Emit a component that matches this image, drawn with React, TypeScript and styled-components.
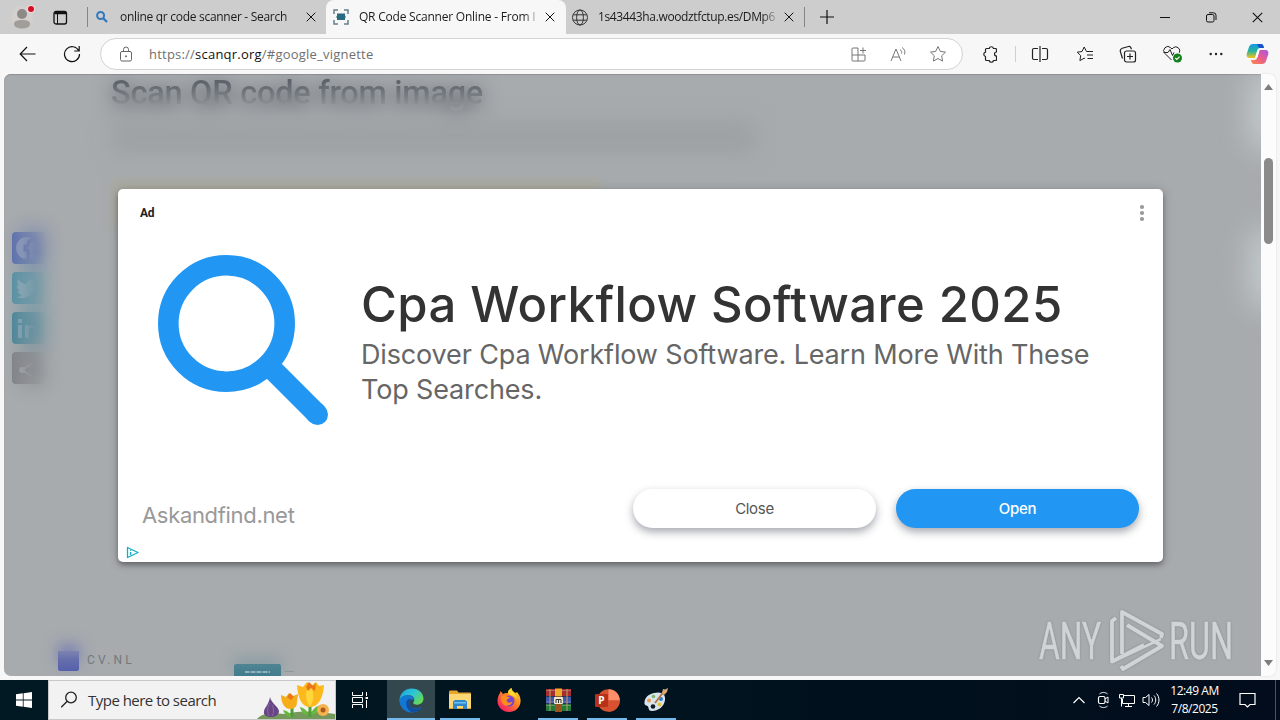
import React from "react";
import styled, { createGlobalStyle, css } from "styled-components";

const uiFont = `"Open Sans", "Noto Sans", sans-serif`;
const adFont = `Inter, Roboto, sans-serif`;

interface TabProps {
    title: string;
    icon: React.ReactNode;
    active?: boolean;
    spacing: number;
}
const BrowserTab = (props: TabProps) => {
    const { title, icon, active, spacing } = props;
    return (
        <Tab $active={active}>
            <Favicon>{icon}</Favicon>
            <TabTitle $spacing={spacing}>{title}</TabTitle>
            <CloseIcon size={10} />
        </Tab>
    );
};

const CloseIcon = ({ size }: { size: number }) => (
    <Glyph width={size} height={size} viewBox="0 0 10 10">
        <path d="M.7.7l8.6 8.6M9.3.7L.7 9.3" />
    </Glyph>
);

const starPath = "M9 1.5l2.3 4.9 5.2.7-3.8 3.7.9 5.3L9 13.5l-4.6 2.6.9-5.3L1.500 7.1l5.2-.7z";

const App = () => {
    return (
        <Screen>
            <GlobalStyle />
            <TabStrip>
                <ProfileCell>
                    <svg width="24" height="26" viewBox="0 0 24 26">
                        <circle cx="10" cy="13" r="11" fill="#d3d0ce" />
                        <circle cx="10" cy="10" r="5" fill="#8d8986" />
                        <path d="M2 20c0-3 3-4 8-4s8 1 8 4-4 4.500-8 4.500S2 23 2 20z" fill="#a19d99" />
                        <circle cx="19" cy="5" r="4" fill="#f4d9da" />
                        <circle cx="19" cy="5" r="3" fill="#d20f26" />
                    </svg>
                </ProfileCell>
                <WorkspaceCell>
                    <Glyph width="15" height="15" viewBox="0 0 15 15">
                        <rect x="1" y="1.500" width="12.500" height="12.500" rx="2" strokeWidth="1.300" />
                        <path d="M1.500 3h11.500" strokeWidth="2.500" />
                        <path d="M4.500 4v10" />
                    </Glyph>
                </WorkspaceCell>
                <TabDivider />
                <BrowserTab
                    title="online qr code scanner - Search"
                    spacing={-0.29}
                    icon={
                        <svg width="16" height="16" viewBox="0 0 16 16" fill="none" stroke="#2f78c0" strokeWidth="2">
                            <circle cx="6.600" cy="6.500" r="3.500" />
                            <path d="M9 9l4 4" strokeWidth="2.300" />
                        </svg>
                    } />
                <BrowserTab
                    active
                    title="QR Code Scanner Online - From I"
                    spacing={-0.22}
                    icon={
                        <svg width="16" height="16" viewBox="0 0 16 16" fill="none" stroke="#67808a" strokeWidth="1.500">
                            <path d="M1 5V1h4M11 1h4v4M15 11v4h-4M5 15H1v-4" />
                            <rect x="4" y="4.500" width="8" height="6.500" fill="#276d7f" stroke="none" />
                            <path d="M3 8h10" stroke="#276d7f" strokeWidth="1" />
                        </svg>
                    } />
                <BrowserTab
                    title="1s43443ha.woodztfctup.es/DMp6"
                    spacing={-0.36}
                    icon={
                        <Glyph width="17" height="17" viewBox="0 0 17 17" $color="#333">
                            <circle cx="8" cy="8.500" r="7.500" />
                            <ellipse cx="8" cy="8.500" rx="3.400" ry="7.500" />
                            <path d="M1.200 5.800h13.600M1.200 11.200h13.600" />
                        </Glyph>
                    } />
                <TabDivider />
                <NewTab>
                    <Glyph width="14" height="14" viewBox="0 0 14 14"><path d="M7 0v14M0 7h14" strokeWidth="1.200" /></Glyph>
                </NewTab>
                <WindowButtons>
                    <WindowButton><Glyph width="10" height="10" viewBox="0 0 10 10"><path d="M0 5.500h10" /></Glyph></WindowButton>
                    <WindowButton>
                        <Glyph width="11" height="11" viewBox="0 0 11 11">
                            <rect x=".500" y="2.500" width="7.500" height="7.500" rx="1.500" />
                            <path d="M3 .800h4.500a2.500 2.500 0 012.500 2.500V8" />
                        </Glyph>
                    </WindowButton>
                    <WindowButton><CloseIcon size={11} /></WindowButton>
                </WindowButtons>
            </TabStrip>

            <Toolbar>
                <ToolCell $width={56}>
                    <Glyph width="18" height="16" viewBox="0 0 18 16"><path d="M16.500 8H1.500M8 1L1.200 8 8 15" strokeWidth="1.200" /></Glyph>
                </ToolCell>
                <ToolCell $width={32}>
                    <Glyph width="18" height="18" viewBox="0 0 18 18">
                        <path d="M15.800 6A7.500 7.500 0 1016.500 9M16.200 1v5h-5" strokeWidth="1.200" />
                    </Glyph>
                </ToolCell>
                <AddressBar>
                    <Glyph width="14" height="17" viewBox="0 0 14 17" $color="#666">
                        <rect x="1.500" y="5.500" width="11" height="9.500" rx="1.500" />
                        <path d="M4.500 5.500V3.500a2.500 2.500 0 015 0v2" />
                        <circle cx="7" cy="10.300" r=".600" fill="#666" />
                    </Glyph>
                    <Url>https://<b>scanqr.org</b>/#google_vignette</Url>
                    <ToolCell $width={40}>
                        <Glyph width="17" height="17" viewBox="0 0 17 17" $color="#777">
                            <path d="M8 2H3a1 1 0 00-1 1v11a1 1 0 001 1h11a1 1 0 001-1V9H2M8 2v13M13 1.500v6M10 4.500h6" />
                        </Glyph>
                    </ToolCell>
                    <ToolCell $width={40}>
                        <Glyph width="17" height="17" viewBox="0 0 17 17" $color="#777">
                            <path d="M1 15L6 3l5 12M2.700 11h6.600M10 3.500c1.500 1 2 2.500 1.500 4M12 1.500c2.500 1.500 3.500 4 2.500 7" />
                        </Glyph>
                    </ToolCell>
                    <ToolCell $width={40}>
                        <Glyph width="18" height="18" viewBox="0 0 18 18" $color="#777"><path d={starPath} /></Glyph>
                    </ToolCell>
                </AddressBar>
                <ToolCell $width={52}>
                    <Glyph width="16" height="18" viewBox="-1 0 16 18" $color="#222">
                        <path d="M4.500 3.500h2.700a2.200 2.200 0 014.300 0h2a1 1 0 011 1V7a2 2 0 000 4v3.500a1 1 0 01-1 1h-2a2.200 2.200 0 01-4.300 0H4.500a1 1 0 01-1-1v-3a2.200 2.200 0 010-4.300V4.500a1 1 0 011-1z" strokeWidth="1.200" strokeLinejoin="round" />
                    </Glyph>
                </ToolCell>
                <ToolDivider />
                <ToolCell $width={47}>
                    <Glyph width="18" height="18" viewBox="0 0 18 18" $color="#222">
                        <path d="M7 3.500H3a1.500 1.500 0 00-1.500 1.500v8A1.500 1.500 0 003 14.500h4M11 3.500h4A1.500 1.500 0 0116.500 5v8a1.500 1.500 0 01-1.500 1.500h-4M9 1v16" strokeWidth="1.200" />
                    </Glyph>
                </ToolCell>
                <ToolCell $width={43}>
                    <Glyph width="18" height="18" viewBox="0 0 18 18" $color="#222">
                        <path d="M10.500 6.500L8.200 2 6 6.500l-4.800.700 3.500 3.400-.800 5 4.300-2.400.800.500M10.500 6.500H17M11 10h6M11.500 13.500H17" />
                    </Glyph>
                </ToolCell>
                <ToolCell $width={44}>
                    <Glyph width="18" height="18" viewBox="0 0 18 18" $color="#222">
                        <rect x="5.500" y="6" width="11" height="11" rx="2" strokeWidth="1.200" />
                        <path d="M11 8.500v6M8 11.500h6M3.500 13.500L1.500 7a3 3 0 011.800-3.800L9.500 1.500a2 2 0 012.400 1.300l.500 1.500" strokeWidth="1.200" />
                    </Glyph>
                </ToolCell>
                <ToolCell $width={44}>
                    <svg width="20" height="18" viewBox="-.5 0 20 18" fill="none" stroke="#222">
                        <path d="M9 15L2.500 8.500a4 4 0 015.700-5.800L9.500 4l1.300-1.300a4 4 0 016 5M1 7.500h4.500l2-3 2.500 6 1.500-3" />
                        <circle cx="15" cy="13" r="4.500" fill="#13801e" stroke="none" />
                        <path d="M12.800 13l1.500 1.500 2.800-2.800" stroke="#fff" strokeWidth="1.100" />
                    </svg>
                </ToolCell>
                <ToolCell $width={43}>
                    <svg width="14" height="4" viewBox="0 0 14 4" fill="#222">
                        <circle cx="1.700" cy="2" r="1.200" /><circle cx="7" cy="2" r="1.200" /><circle cx="12.300" cy="2" r="1.200" />
                    </svg>
                </ToolCell>
                <ToolCell $width={41}><CopilotLogo /></ToolCell>
            </Toolbar>

            <Content>
                <Viewport>
                    <Page>
                        <PageHeading>Scan QR code from image</PageHeading>
                        <Smudge />
                        <Notice />
                    </Page>
                    <ShareBar>
                        <ShareButton $color="#5168ad">
                            <svg width="26" height="26" viewBox="0 0 26 26">
                                <circle cx="13" cy="13" r="11" />
                                <path d="M14 24V15h-3v-4h3V9c0-3 2-4 6-4" fill="none" stroke="#5f73ac" strokeWidth="3" />
                            </svg>
                        </ShareButton>
                        <ShareButton $color="#4c8da2">
                            <svg width="26" height="26" viewBox="0 0 26 26">
                                <path d="M2 22c3 0 5-1 6-2-3-1-4-2-4-4l2-.500C3 14 3 12 3 10l2 .800C3 8 3 6 4 4c3 4 6 5 9 5 0-4 4-6 8-4l3-1-2 4c0 11-10 18-20 14z" />
                            </svg>
                        </ShareButton>
                        <ShareButton $color="#3f8197">
                            <svg width="26" height="26" viewBox="0 0 26 26">
                                <path d="M4 10h4v13H4zM4 4h4v4H4zM11 10h4v2c3-4 9-2 9 3v8h-4v-7c0-4-5-4-5 0v7h-4z" />
                            </svg>
                        </ShareButton>
                        <ShareButton $color="#7b7d82">
                            <svg width="26" height="26" viewBox="0 0 26 26">
                                <path d="M19 8L8 15l11 7" fill="none" stroke="#b4bbc4" strokeWidth="2" />
                                <circle cx="8" cy="15" r="3" />
                            </svg>
                        </ShareButton>
                    </ShareBar>
                    <EdgeGlow $top={0} />
                    <EdgeGlow $top={158} />
                    <PageFooter>
                        <FooterLogo />
                        <FooterBrand>CV.NL</FooterBrand>
                        <FooterButton />
                        <FooterDash />
                    </PageFooter>
                    <Modal>
                        <ModalTop>
                            <AdLabel>Ad</AdLabel>
                            <svg width="6" height="18" viewBox="0 0 6 18" fill="#999">
                                <circle cx="3" cy="3" r="2.100" /><circle cx="3" cy="9" r="2.100" /><circle cx="3" cy="15" r="2.100" />
                            </svg>
                        </ModalTop>
                        <ModalBody>
                            <svg width="172" height="172" viewBox="0 0 172 172" fill="none" stroke="#2196f3">
                                <circle cx="69.500" cy="69.500" r="58.200" strokeWidth="20.600" />
                                <path d="M112 112L160.500 160.500" strokeWidth="21" />
                                <path d="M158 158l2.500 2.500" strokeWidth="21" strokeLinecap="round" />
                            </svg>
                            <AdCopy>
                                <AdHeadline>Cpa Workflow Software 2025</AdHeadline>
                                <AdText>Discover Cpa Workflow Software. Learn More With These<br />Top Searches.</AdText>
                            </AdCopy>
                        </ModalBody>
                        <ModalActions>
                            <Advertiser>Askandfind.net</Advertiser>
                            <AdButton>Close</AdButton>
                            <AdButton $primary>Open</AdButton>
                        </ModalActions>
                        <AdChoices>
                            <svg width="13" height="13" viewBox="-.5 0 13 13" fill="none" stroke="#12aec4" strokeWidth="1.300" strokeLinejoin="round">
                                <path d="M1 1.500v10l10.500-5z" />
                                <path d="M4.200 4v.900M4.200 6v3" />
                            </svg>
                        </AdChoices>
                    </Modal>
                    <Watermark><AnyRunLogo /></Watermark>
                </Viewport>
                <ScrollTrack>
                    <ScrollArrow viewBox="0 0 9 6"><path d="M0 6L4.500 0 9 6z" /></ScrollArrow>
                    <ScrollThumb />
                    <ScrollArrow viewBox="0 0 9 6"><path d="M0 0l4.500 6L9 0z" /></ScrollArrow>
                </ScrollTrack>
            </Content>

            <Taskbar>
                <StartButton>
                    <svg width="16" height="16" viewBox="0 0 16 16" fill="#fff">
                        <path d="M0 2.300L6.800 1.300v6.300H0zM7.600 1.200L16 0v7.600H7.600zM0 8.400h6.800v6.300L0 13.700zM7.600 8.400H16V16l-8.400-1.200z" />
                    </svg>
                </StartButton>
                <SearchBox>
                    <Glyph width="18" height="18" viewBox="0 0 18 18" $color="#222">
                        <circle cx="10" cy="6.500" r="5.300" strokeWidth="1.300" />
                        <path d="M6.200 10.300L.200 16.300" strokeWidth="1.300" />
                    </Glyph>
                    <SearchHint>Type here to search</SearchHint>
                    <Flowers />
                </SearchBox>
                <TaskView>
                    <Glyph width="18" height="16" viewBox="0 0 18 16" $color="#fff">
                        <path d="M1.500 0v3.500h10V0M1.500 16v-3.500h10V16M1.500 5.500h10v5h-10zM15.500 0v4M15.500 8v8" />
                        <path d="M14.500 6h2.500" strokeWidth="2" />
                    </Glyph>
                </TaskView>
                <Apps>
                    <AppCell $state="active"><EdgeLogo /></AppCell>
                    <AppCell $state="open"><ExplorerIcon /></AppCell>
                    <AppCell><FirefoxLogo /></AppCell>
                    <AppCell $state="open"><RarIcon /></AppCell>
                    <AppCell $state="open"><SlidesIcon /></AppCell>
                    <AppCell $state="open"><PaintIcon /></AppCell>
                </Apps>
                <Tray>
                    <TrayCell>
                        <Glyph width="12" height="8" viewBox="0 0 12 8" $color="#fff"><path d="M.500 7L6 1.500 11.500 7" strokeWidth="1.200" /></Glyph>
                    </TrayCell>
                    <TrayCell>
                        <Glyph width="14" height="18" viewBox="0 0 14 18" $color="#fff">
                            <rect x="2.500" y="5.500" width="6.500" height="7" rx="1.500" strokeWidth="1.200" />
                            <path d="M9 8l3-2v6l-3-2M3.500 3c2-2 6-2 8 0M3.500 15c2 2 6 2 8 0" />
                        </Glyph>
                    </TrayCell>
                    <TrayCell>
                        <Glyph width="18" height="16" viewBox="0 0 18 16" $color="#fff">
                            <path d="M6 3.500h10.500v8H4.500V7M10.500 11.500v3M7 14.500h7M1.500 2.500h4v3.500h-4zM3.500 6v8.500" />
                        </Glyph>
                    </TrayCell>
                    <TrayCell>
                        <Glyph width="18" height="16" viewBox="0 0 18 16" $color="#fff">
                            <path d="M1 5.500h2.500L7 2.500v11l-3.500-3H1zM9.500 5.500c1.300 1.500 1.300 3.500 0 5M12 3.500c2.300 2.500 2.300 6.500 0 9M14.500 1.500c3.300 3.500 3.300 9.500 0 13" />
                        </Glyph>
                    </TrayCell>
                    <Clock>
                        <span>12:49 AM</span>
                        <span>7/8/2025</span>
                    </Clock>
                    <Notifications>
                        <Glyph width="17" height="17" viewBox="0 0 17 17" $color="#fff">
                            <path d="M1 1.500h15v11h-5l-2.500 2.500L6 12.500H1z" strokeWidth="1.200" />
                        </Glyph>
                    </Notifications>
                    <ShowDesktop />
                </Tray>
            </Taskbar>
        </Screen>
    );
};

const CopilotLogo = () => (
    <svg width="23" height="22" viewBox="0 0 23 22">
        <defs>
            <linearGradient id="cpA" x1="0" y1="0" x2="0" y2="1">
                <stop offset="0" stopColor="#1499e8" /><stop offset=".5" stopColor="#27b39b" /><stop offset="1" stopColor="#f4c51c" />
            </linearGradient>
            <linearGradient id="cpB" x1="1" y1="0" x2="0" y2="1">
                <stop offset="0" stopColor="#a953e8" /><stop offset=".55" stopColor="#ee6183" /><stop offset="1" stopColor="#fb8b45" />
            </linearGradient>
        </defs>
        <path d="M7 1h8c2 0 2.500 2 3 4h-4c-2 0-2.500 1.500-3 3l-2 7H4c-3 0-4-2-3-5l2-6c.700-2 2-3 4-3z" fill="url(#cpA)" />
        <path d="M11 1h4c2 0 2.500 2 3 4h-4c-1.500 0-2-2-3-4z" fill="#1654c8" />
        <path d="M16 21H8c-2 0-2.500-2-3-4h3c2 0 3-1 3.500-3l2-7H19c3 0 4 2 3 5l-2 6c-.700 2-2 3-4 3z" fill="url(#cpB)" />
        <path d="M11.500 7.500h2L11.500 14h-2z" fill="#fff" />
    </svg>
);

const AnyRunLogo = () => (
    <svg width="200" height="64" viewBox="0 0 200 64">
        <g fill="#d0d4d6" stroke="#d0d4d6" strokeWidth=".5" fontFamily="Roboto" fontSize="51.500" fontWeight="400">
            <text x="0" y="50" textLength="62" lengthAdjust="spacingAndGlyphs">ANY</text>
            <text x="130" y="50" textLength="64" lengthAdjust="spacingAndGlyphs">RUN</text>
        </g>
        <g fill="none" stroke="#d0d4d6" strokeWidth="3.800" strokeLinejoin="round">
            <path d="M77 9l-4 3v40.500L105 36" />
            <path d="M122 29l1-4L83 3v42" />
            <path d="M88 16l35 21L84 60l-2-3" />
            <path d="M73 53L122 30" strokeWidth="2.500" />
        </g>
    </svg>
);

const Flowers = () => (
    <FlowerArt viewBox="0 0 78 38">
        <path d="M0 38c6-7 16-6 28-5 12-3 24-3 32-2 8 1 14 1 18 2v5z" fill="#74995a" />
        <path d="M35 36V22M53 36V16" stroke="#4f9e35" strokeWidth="3" />
        <path d="M33 36c-4-1-6-4-7-7 5 1 8 4 8 7zM54 34c1-6 5-9 10-10-1 6-4 9-10 10zM51 34c-1-5-4-7-8-8 1 5 4 8 8 8z" fill="#69b83e" />
        <path d="M13 16c1 6 8 9 9 14 0 4-4 6-8 6s-8-2-7-6c1-4 5-7 6-14z" fill="#684585" />
        <path d="M13 22c-3 4-3 9-1 13M15 24c2 4 2 8 0 11" stroke="#8e6aaa" fill="none" />
        <path d="M24 14l5 2 3-4 4 3 5-2-1 8c0 5-3 7-7 7-5 0-9-6-9-14z" fill="#f5ae1a" />
        <path d="M40 4l6 2 4-5 5 3 4-3 3 4 5-1c-1 14-6 22-14 22S41 18 40 4z" fill="#fbb91e" />
        <path d="M53 26c-5-7-5-15-1-23 5 7 6 15 1 23z" fill="#ffd73b" />
        <path d="M49 6l3-5 4 4 3-3-1 8-4-3-3 3zM30 16l3-4 4 4-3 3z" fill="#e97719" />
        <circle cx="66" cy="29" r="6" fill="#f7b24d" /><circle cx="66" cy="29" r="2.500" fill="#a75b1f" />
    </FlowerArt>
);

const EdgeLogo = () => (
    <svg width="25" height="25" viewBox="0 0 24 24">
        <defs>
            <linearGradient id="edgeTop" x1="0" y1="0" x2="1" y2=".6">
                <stop offset="0" stopColor="#1c9fe0" /><stop offset=".55" stopColor="#2cc6d4" /><stop offset="1" stopColor="#63d857" />
            </linearGradient>
        </defs>
        <path d="M.500 11C1.500 4.500 6 .500 12 .500c7 0 11.500 4.500 11.500 9.500 0 4-3 6-6.500 6-2.500 0-4-1-3-2.500 2-3-.500-6.500-4.500-6.500C5 7 1.500 9 .500 13z" fill="url(#edgeTop)" />
        <path d="M.500 12C1 8.500 5 6.500 9.500 7c3 .300 5 2 5 4.500-3-1.500-5 1-4.500 3.500.500 4 6 6.500 12 3-2 3.500-6 5.500-10 5.500C5.500 23.500.200 18 .500 12z" fill="#1477d2" />
        <path d="M8.500 11C6 13 6 20 12.500 23.500 16.500 23.500 20 21.500 22 18.500 16 21.500 10.500 19 10 15c-.300-2 .5-3.500 2-4-1-.500-2.500-.500-3.500 0z" fill="#114f9e" />
    </svg>
);

const ExplorerIcon = () => (
    <svg width="22" height="20" viewBox="0 0 22 20">
        <path d="M0 1.500L1 .500h7l1.500 2H21a1 1 0 011 1V19H0z" fill="#e6a42c" />
        <rect y="4" width="22" height="14" fill="#fbd875" />
        <path d="M4 19v-7.500l2-1.500h10l2 1.500V19h-4v-3H8v3z" fill="#3187cc" />
        <path d="M5 12h12v1.500H5z" fill="#6cc0f1" />
    </svg>
);

const FirefoxLogo = () => (
    <svg width="24" height="24" viewBox="0 0 24 24">
        <defs>
            <linearGradient id="fox" x1="1" y1="0" x2=".2" y2="1">
                <stop offset="0" stopColor="#ffe53b" /><stop offset=".45" stopColor="#ff8a1f" /><stop offset="1" stopColor="#f5156c" />
            </linearGradient>
        </defs>
        <path d="M3 5l.500-2 2.500 3c1.500-1 3-1.300 5-1 0-2 1.500-4 3.500-5 0 2.500 2 3.500 4 5l1.500-1c2.500 3 4 6 3.500 10-.500 6-5.500 10-11.500 10C5.500 24 .500 19 .500 13 .500 10 1.500 7 3 5z" fill="url(#fox)" />
        <circle cx="12" cy="13" r="5.500" fill="#7746cf" />
        <path d="M4 9c3-3 6 0 9 0-1 2-3 1.500-3.500 3.500 1 3 4 2.500 6 1-1 5-9 6-11 0z" fill="#ff8d1c" />
        <path d="M11 5c0-2 1.500-4 3.500-5 0 4 5 5 5.500 11-1.500-2-3-3-5-3.500C13.500 7 12 6 11 5z" fill="#ffd92e" />
    </svg>
);

const RarIcon = () => (
    <svg width="25" height="24" viewBox="0 0 25 24">
        <rect y="1" width="25" height="7" fill="#a72e2e" />
        <rect y="8.500" width="25" height="7" fill="#3e56ac" />
        <rect y="16" width="25" height="7" fill="#237b3a" />
        <path d="M0 2.500h25M0 14h25M0 17.500h25" stroke="#d5ccc5" strokeOpacity=".35" />
        <rect x="9" y="0" width="7" height="24" fill="#9b541d" />
        <path d="M9 1h7v7H9z" fill="#eeac2e" />
        <path d="M4 1v22M21 1v22" stroke="#c1a067" />
        <rect x="8" y="9" width="9" height="7" rx="1" fill="#f1e7ce" />
        <path d="M10 15v-3.500h5V15M12.500 12v3" stroke="#333" fill="none" />
    </svg>
);

const SlidesIcon = () => (
    <svg width="25" height="23" viewBox="0 0 25 23">
        <circle cx="13.500" cy="11.500" r="11.300" fill="#d35230" />
        <path d="M13.500.200A11.300 11.300 0 0124.800 11.500H13.500z" fill="#ff8f6b" />
        <path d="M24.800 11.500A11.300 11.300 0 0113.500 22.800V11.500z" fill="#d9512f" />
        <rect y="5" width="13" height="13" rx="1" fill="#b7311a" />
        <text x="3.300" y="15" fill="#fff" fontFamily="Open Sans" fontSize="10" fontWeight="700">P</text>
    </svg>
);

const PaintIcon = () => (
    <svg width="24" height="24" viewBox="0 0 24 24">
        <path d="M10 5c7-2 12 1 11 7-1 7-7 11-13 11-4 0-3-3-4-4.500C3 17 0 18 .500 14 1 9 5 6 10 5z" fill="#d9e4ec" />
        <circle cx="9" cy="18.500" r="2.300" fill="#141c23" />
        <circle cx="5" cy="12.500" r="2" fill="#e99a4a" /><circle cx="9.500" cy="8.500" r="1.800" fill="#7fb46c" />
        <circle cx="17" cy="11" r="2" fill="#2e7fd0" /><circle cx="15.500" cy="16.500" r="2" fill="#e3c33d" />
        <path d="M11 15L19.500 4" stroke="#b47a43" strokeWidth="2" />
        <path d="M18 5l1-4 2 .5L24 0l-1 4-3 3z" fill="#d8a877" />
    </svg>
);

export default App;

const GlobalStyle = createGlobalStyle`
    *{
        box-sizing: border-box;
    }
    body{
        margin: 0;
        font-family: ${uiFont};
    }
    svg{
        display: block;
        flex-shrink: 0;
    }
`

const Glyph = styled.svg<{ $color?: string }>`
    fill: none;
    stroke: ${({ $color }) => $color || '#111'};
`

const Screen = styled.div`
    width: 1280px;
    height: 720px;
    display: flex;
    flex-direction: column;
    overflow: hidden;
    background: #f7f7f8;
`

const TabStrip = styled.header`
    height: 34px;
    display: flex;
    align-items: center;
    background: #cdcdcd;
`

const ProfileCell = styled.div`
    width: 50px;
    padding: 0 0 0 12px;
`

const WorkspaceCell = styled.div`
    width: 37px;
    padding-left: 3px;
`

const TabDivider = styled.div`
    width: 1px;
    height: 20px;
    margin-right: -1px;
    background: #858585;
`

const Tab = styled.div<{ $active?: boolean }>`
    width: 239px;
    height: 34px;
    display: flex;
    align-items: center;
    padding-left: 7px;
    ${({ $active }) => $active && css`
        width: 240px;
        margin-right: -1px;
        background: #f7f7f7;
        border-radius: 8px 8px 0 0;
    `}
`

const Favicon = styled.span`
    width: 26px;
    flex-shrink: 0;
`

const TabTitle = styled.span<{ $spacing: number }>`
    width: 180px;
    margin-right: 6px;
    flex-shrink: 0;
    white-space: nowrap;
    font-size: 12px;
    line-height: 18px;
    letter-spacing: ${({ $spacing }) => $spacing}px;
    color: #1b1b1b;
    mask-image: linear-gradient(to right, #000 164px, transparent 182px);
`

const NewTab = styled.div`
    margin-left: 16px;
`

const WindowButtons = styled.div`
    display: flex;
    margin-left: auto;
`

const WindowButton = styled.div`
    width: 46px;
    display: flex;
    align-items: center;
    justify-content: center;
`

const Toolbar = styled.div`
    height: 40px;
    display: flex;
    align-items: center;
`

const ToolCell = styled.div<{ $width: number }>`
    width: ${({ $width }) => $width}px;
    flex-shrink: 0;
    display: flex;
    align-items: center;
    justify-content: center;
`

const ToolDivider = styled.div`
    width: 1px;
    height: 16px;
    background: #cfcfcf;
`

const AddressBar = styled.div`
    width: 863px;
    height: 32px;
    margin-left: 12px;
    padding: 0 4px 0 18px;
    display: flex;
    align-items: center;
    background: #fff;
    border: 1px solid #d2d2d2;
    border-radius: 16px;
`

const Url = styled.span`
    flex: 1;
    padding-left: 16px;
    font-size: 13px;
    letter-spacing: 0.220px;
    color: #707070;
    b{
        font-weight: 400;
        color: #111;
    }
`

const Content = styled.div`
    height: 606px;
    display: flex;
    padding: 0 4px 4px;
`

const Viewport = styled.main`
    position: relative;
    width: 1257px;
    height: 602px;
    overflow: hidden;
    border-radius: 7px 0 0 7px;
    background: #a7abae;
    box-shadow: inset 0 1px 1px #8d9194;
`

const Page = styled.section`
    padding: 0 0 0 107px;
`

const PageHeading = styled.h1`
    width: 380px;
    height: 46px;
    margin: 0;
    font: 500 32.500px/39px Roboto, sans-serif;
    letter-spacing: -0.250px;
    white-space: nowrap;
    color: #646a70;
    background: linear-gradient(#5d636a 8px, #7d8287 24px, #94989b 33px);
    background-clip: text;
    -webkit-text-fill-color: transparent;
    filter: drop-shadow(0 3px 10px #50555e);
`

const Smudge = styled.div`
    width: 645px;
    height: 34px;
    background: #989c9f;
    opacity: .65;
    filter: blur(11px);
`

const Notice = styled.div`
    width: 490px;
    height: 50px;
    margin: 25px 0 0;
    background: #a9a9a0;
    filter: blur(4px);
`

const ShareBar = styled.nav`
    position: absolute;
    left: 8px;
    top: 158px;
    display: grid;
    gap: 8px;
`

const ShareButton = styled.div<{ $color: string }>`
    position: relative;
    width: 34px;
    height: 32px;
    padding: 3px 2px;
    border-radius: 4px 0 0 4px;
    background: linear-gradient(to right, ${({ $color }) => $color}, transparent);
    opacity: .85;
    &::before{
        content: "";
        position: absolute;
        left: 10px;
        top: -2px;
        width: 22px;
        height: 36px;
        background: ${({ $color }) => $color};
        filter: blur(10px);
        opacity: .7;
    }
    svg{
        position: relative;
        fill: #b4bdca;
        opacity: .4;
        mask-image: linear-gradient(to right, #000 30%, transparent 85%);
    }
`

const EdgeGlow = styled.div<{ $top: number }>`
    position: absolute;
    right: -22px;
    top: ${({ $top }) => $top}px;
    width: 30px;
    height: 74px;
    background: #cbd1d5;
    filter: blur(16px);
`

const PageFooter = styled.footer`
    position: absolute;
    left: 54px;
    bottom: 0;
    height: 40px;
    display: flex;
    align-items: flex-end;
`

const FooterLogo = styled.div`
    width: 21px;
    height: 20px;
    margin-bottom: 5px;
    background: linear-gradient(#7c83b0, #656eac 9px, #5660ab);
    border-radius: 0 0 2px 2px;
    box-shadow: 0 -7px 15px -1px #7077b2;
`

const FooterBrand = styled.span`
    width: 147px;
    margin-bottom: 7px;
    padding-left: 8px;
    font: 400 12px/17px Roboto, sans-serif;
    letter-spacing: 3.100px;
    color: #74787c;
`

const FooterButton = styled.div`
    width: 47px;
    height: 12px;
    margin-left: 8px;
    padding: 7px 11px 0;
    border-radius: 2px 2px 0 0;
    background: linear-gradient(#4f8493, #427c8d);
    box-shadow: 0 -5px 15px #82999f;
    &::after{
        content: "";
        display: block;
        height: 2px;
        background: repeating-linear-gradient(to right, #8eb3be 0 4px, #6496a4 4px 6px);
    }
`

const FooterDash = styled.div`
    width: 9px;
    height: 1px;
    margin: 0 0 4px 4px;
    background: #8b989d;
`

const Modal = styled.section`
    position: absolute;
    left: 114px;
    top: 115px;
    width: 1045px;
    height: 373px;
    display: flex;
    flex-direction: column;
    background: #fff;
    border-radius: 5px;
    box-shadow: 0 3px 5px rgba(0, 0, 0, .32), 0 1px 12px rgba(0, 0, 0, .16);
    font-family: ${adFont};
`

const ModalTop = styled.div`
    height: 48px;
    display: flex;
    align-items: center;
    justify-content: space-between;
    padding: 0 18px 0 22px;
`

const AdLabel = styled.span`
    font: 700 12px Roboto, sans-serif;
    letter-spacing: -0.200px;
    color: #202124;
`

const ModalBody = styled.div`
    display: flex;
    height: 252px;
    padding: 17px 0 0 39px;
`

const AdCopy = styled.div`
    padding: 21px 0 0 32px;
`

const AdHeadline = styled.h2`
    margin: 0;
    font-size: 49px;
    line-height: 60px;
    font-weight: 500;
    letter-spacing: 0.430px;
    white-space: nowrap;
    color: #333;
`

const AdText = styled.p`
    margin: 2px 0 0;
    font-size: 27px;
    line-height: 35px;
    letter-spacing: -0.150px;
    white-space: nowrap;
    color: #666;
`

const ModalActions = styled.div`
    height: 39px;
    display: flex;
    align-items: center;
    gap: 20px;
    padding: 0 24px;
`

const Advertiser = styled.span`
    margin: 13px auto 0 0;
    font-size: 22px;
    letter-spacing: -0.320px;
    color: #999;
`

const AdButton = styled.button<{ $primary?: boolean }>`
    width: 243px;
    height: 39px;
    padding: 0 0 1px;
    border: none;
    border-radius: 20px;
    background: ${({ $primary }) => $primary ? '#2196f3' : '#fff'};
    color: ${({ $primary }) => $primary ? '#fff' : '#555'};
    font-family: ${adFont};
    font-size: 15px;
    font-weight: ${({ $primary }) => $primary ? 500 : 400};
    letter-spacing: -0.300px;
    box-shadow: 0 4px 9px rgba(60, 64, 80, .45);
`

const AdChoices = styled.div`
    margin: 18px 0 0 8px;
`

const Watermark = styled.div`
    position: absolute;
    left: 1035px;
    top: 535px;
    filter: drop-shadow(0 0 1px #85898c);
`

const ScrollTrack = styled.aside`
    width: 15px;
    height: 602px;
    display: flex;
    flex-direction: column;
    align-items: center;
    padding: 10px 0;
    background: #fcfcfc;
    border-radius: 0 7px 7px 0;
    box-shadow: 0 0 2px #d5d5d5;
`

const ScrollArrow = styled.svg`
    width: 9px;
    height: 6px;
    fill: #7d7d7d;
`

const ScrollThumb = styled.div`
    width: 9px;
    height: 86px;
    margin: 68px 0 auto;
    border-radius: 5px;
    background: #8b8b8b;
`

const Taskbar = styled.footer`
    height: 40px;
    display: flex;
    background: linear-gradient(to right, #001923, #00131e 55%, #020c1c);
    color: #fff;
`

const StartButton = styled.div`
    width: 48px;
    display: flex;
    align-items: center;
    justify-content: center;
`

const SearchBox = styled.div`
    width: 288px;
    display: flex;
    align-items: center;
    padding-left: 12px;
    background: #f2f2f2;
    border: 1px solid #c8c8c8;
`

const SearchHint = styled.span`
    padding-left: 9px;
    font-size: 15px;
    letter-spacing: -0.520px;
    white-space: nowrap;
    color: #333;
`

const FlowerArt = styled.svg`
    width: 78px;
    height: 38px;
    margin-left: auto;
`

const TaskView = styled.div`
    width: 51px;
    display: flex;
    align-items: center;
    padding-left: 15px;
`

const Apps = styled.div`
    display: flex;
    gap: 1px;
`

const AppCell = styled.div<{ $state?: 'active' | 'open' }>`
    width: 48px;
    height: 40px;
    display: flex;
    align-items: center;
    justify-content: center;
    background: ${({ $state }) => $state === 'active' ? '#33474f' : 'transparent'};
    ${({ $state }) => $state && css`
        background-image: linear-gradient(#76b9ed, #76b9ed);
        background-repeat: no-repeat;
        background-position: center bottom;
        background-size: ${$state === 'active' ? 48 : 40}px 2px;
    `}
`

const Tray = styled.div`
    display: flex;
    align-items: center;
    margin-left: auto;
`

const TrayCell = styled.div`
    width: 24px;
    display: flex;
    justify-content: center;
`

const Clock = styled.div`
    width: 63px;
    display: flex;
    flex-direction: column;
    align-items: center;
    font-size: 12px;
    line-height: 18px;
    letter-spacing: -0.450px;
    white-space: nowrap;
`

const Notifications = styled.div`
    width: 49px;
    display: flex;
    justify-content: flex-start;
    padding-left: 13px;
`

const ShowDesktop = styled.div`
    width: 5px;
    height: 40px;
    border-left: 1px solid #4b545e;
`
